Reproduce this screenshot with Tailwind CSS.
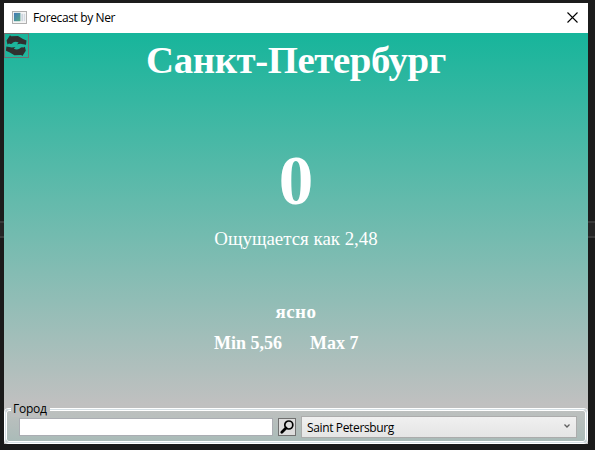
<!DOCTYPE html>
<html lang="ru">
<head>
<meta charset="utf-8">
<title>Forecast by Ner</title>
<script src="https://cdn.jsdelivr.net/npm/@tailwindcss/browser@4"></script>
</head>
<body class="w-[595px] h-[450px] overflow-hidden bg-[#1a1a1a] bg-[linear-gradient(#1c1c1c_0_221px,#393939_221px_223px,#242424_223px_236px,#393939_236px_238px,#1a1a1a_238px)] pt-[3px] pl-1">
<div class="w-[584px] h-[441px] flex flex-col font-['Open_Sans',sans-serif] text-xs text-black">
  <header class="h-[30px] shrink-0 bg-white flex items-center pl-2 pr-2.5">
    <svg class="w-[15px] h-[13px] mb-0.5 shrink-0" viewBox="0 0 16 14">
      <defs><linearGradient id="pane" x1="0" y1="0" x2="1" y2="1"><stop stop-color="#3f79b9"/><stop offset="1" stop-color="#57a785"/></linearGradient></defs>
      <rect x=".5" y=".5" width="15" height="13" fill="#f5f5f5" stroke="#aaa"/>
      <rect x="2" y="2" width="7" height="9" fill="url(#pane)"/>
      <rect x="10" y="3" width="2" height="8" fill="#ccd6df"/><rect x="13" y="3" width="1" height="8" fill="#ccd6df"/>
    </svg>
    <span class="ml-1.5 whitespace-nowrap tracking-[-0.38px]">Forecast by Ner</span>
    <svg class="ml-auto w-[11px] h-[11px] mb-[2px]" viewBox="0 0 11 11"><path d="M.5 .5L10.5 10.5M10.5 .5L.5 10.5" stroke="#000" stroke-width="1.1"/></svg>
  </header>
  <main class="h-[411px] flex flex-col bg-[linear-gradient(#17b59b,#c0c0c0_371px)] text-white">
    <section class="h-[373px] shrink-0 grid grid-cols-1 grid-rows-[54px_134px_77px_31px_1fr] font-['Liberation_Serif',serif] justify-items-center whitespace-nowrap">
      <div class="w-full flex items-start">
        <button class="w-[25px] h-[25px] shrink-0 border border-[#707070] flex items-center justify-center">
          <svg class="w-[21px] h-[21px]" viewBox="0 0 21 21" fill="#303030"><path id="arrow" d="M1.5 9.5L.6 5.5L2.4 2.8L4 .3L5.2 1.3L12 1L17 4L20.5 5.4L20 9.8L14.5 8.8L11 9.3L12.6 7.4Q9.5 6 7 7.4Q5.5 9.6 3 8.6Z"/><use href="#arrow" transform="rotate(180 10.2 10.6)"/></svg>
        </button>
        <h1 class="grow text-center pr-[25px] font-bold text-[38.8px] leading-[53px] tracking-[-0.4px]">Санкт-Петербург</h1>
      </div>
      <div class="font-bold text-[69px] leading-[80px] self-end">0</div>
      <div class="mt-[6px] text-[18.9px] leading-[24px] self-start">Ощущается как 2,48</div>
      <div class="font-bold text-[19px] leading-[28px] tracking-[0.5px]">ясно</div>
      <div class="w-[164px] font-bold text-[18px] leading-[28px] flex gap-7"><span>Min 5,56</span><span>Max 7</span></div>
    </section>
    <fieldset class="relative h-[38px] w-[584px] text-black">
      <div class="absolute left-0 top-[2px] w-[584px] h-[36px] rounded-[4px] border border-white bg-[linear-gradient(#bec0bf,#a9bbb8)] p-px"><div class="h-full rounded-[3px] border border-white"></div></div>
      <div class="absolute left-px top-[3px] w-[582px] h-[34px] rounded-[3px] border border-[#d5dfe5]"></div>
      <legend class="absolute left-[7px] -top-[6px] h-[17px] w-[39px] bg-[linear-gradient(#c0c0c0,#bdbfbf)] pl-[2px] leading-[17px] tracking-[-0.25px]">Город</legend>
      <div class="relative flex items-center pl-[15px] pt-[10px]">
        <input type="text" aria-label="Город" class="w-[254px] h-[18px] bg-white border border-[#abadb3]">
        <button class="ml-[5px] w-[18px] h-[18px] bg-[#ddd] border border-[#707070]">
          <svg class="w-4 h-4" viewBox="0 0 16 16" fill="none" stroke="#000"><circle cx="9.8" cy="6" r="4" stroke-width="1.7"/><path d="M7 9L2.8 13.2" stroke-width="2.8" stroke-linecap="round"/></svg>
        </button>
        <div class="ml-[5px] w-[276px] h-[22px] flex items-center border border-[#acacac] bg-linear-to-b from-[#f0f0f0] to-[#e5e5e5] pl-[5px] pr-[6px]">
          <span class="mt-px whitespace-nowrap tracking-[-0.36px]">Saint Petersburg</span>
          <svg class="ml-auto w-[6px] h-[4px] mb-0.5" viewBox="0 0 6 4"><path d="M.5 .5L3 3L5.5 .5" fill="none" stroke="#606060" stroke-width="1.3"/></svg>
        </div>
      </div>
    </fieldset>
  </main>
</div>
</body>
</html>
